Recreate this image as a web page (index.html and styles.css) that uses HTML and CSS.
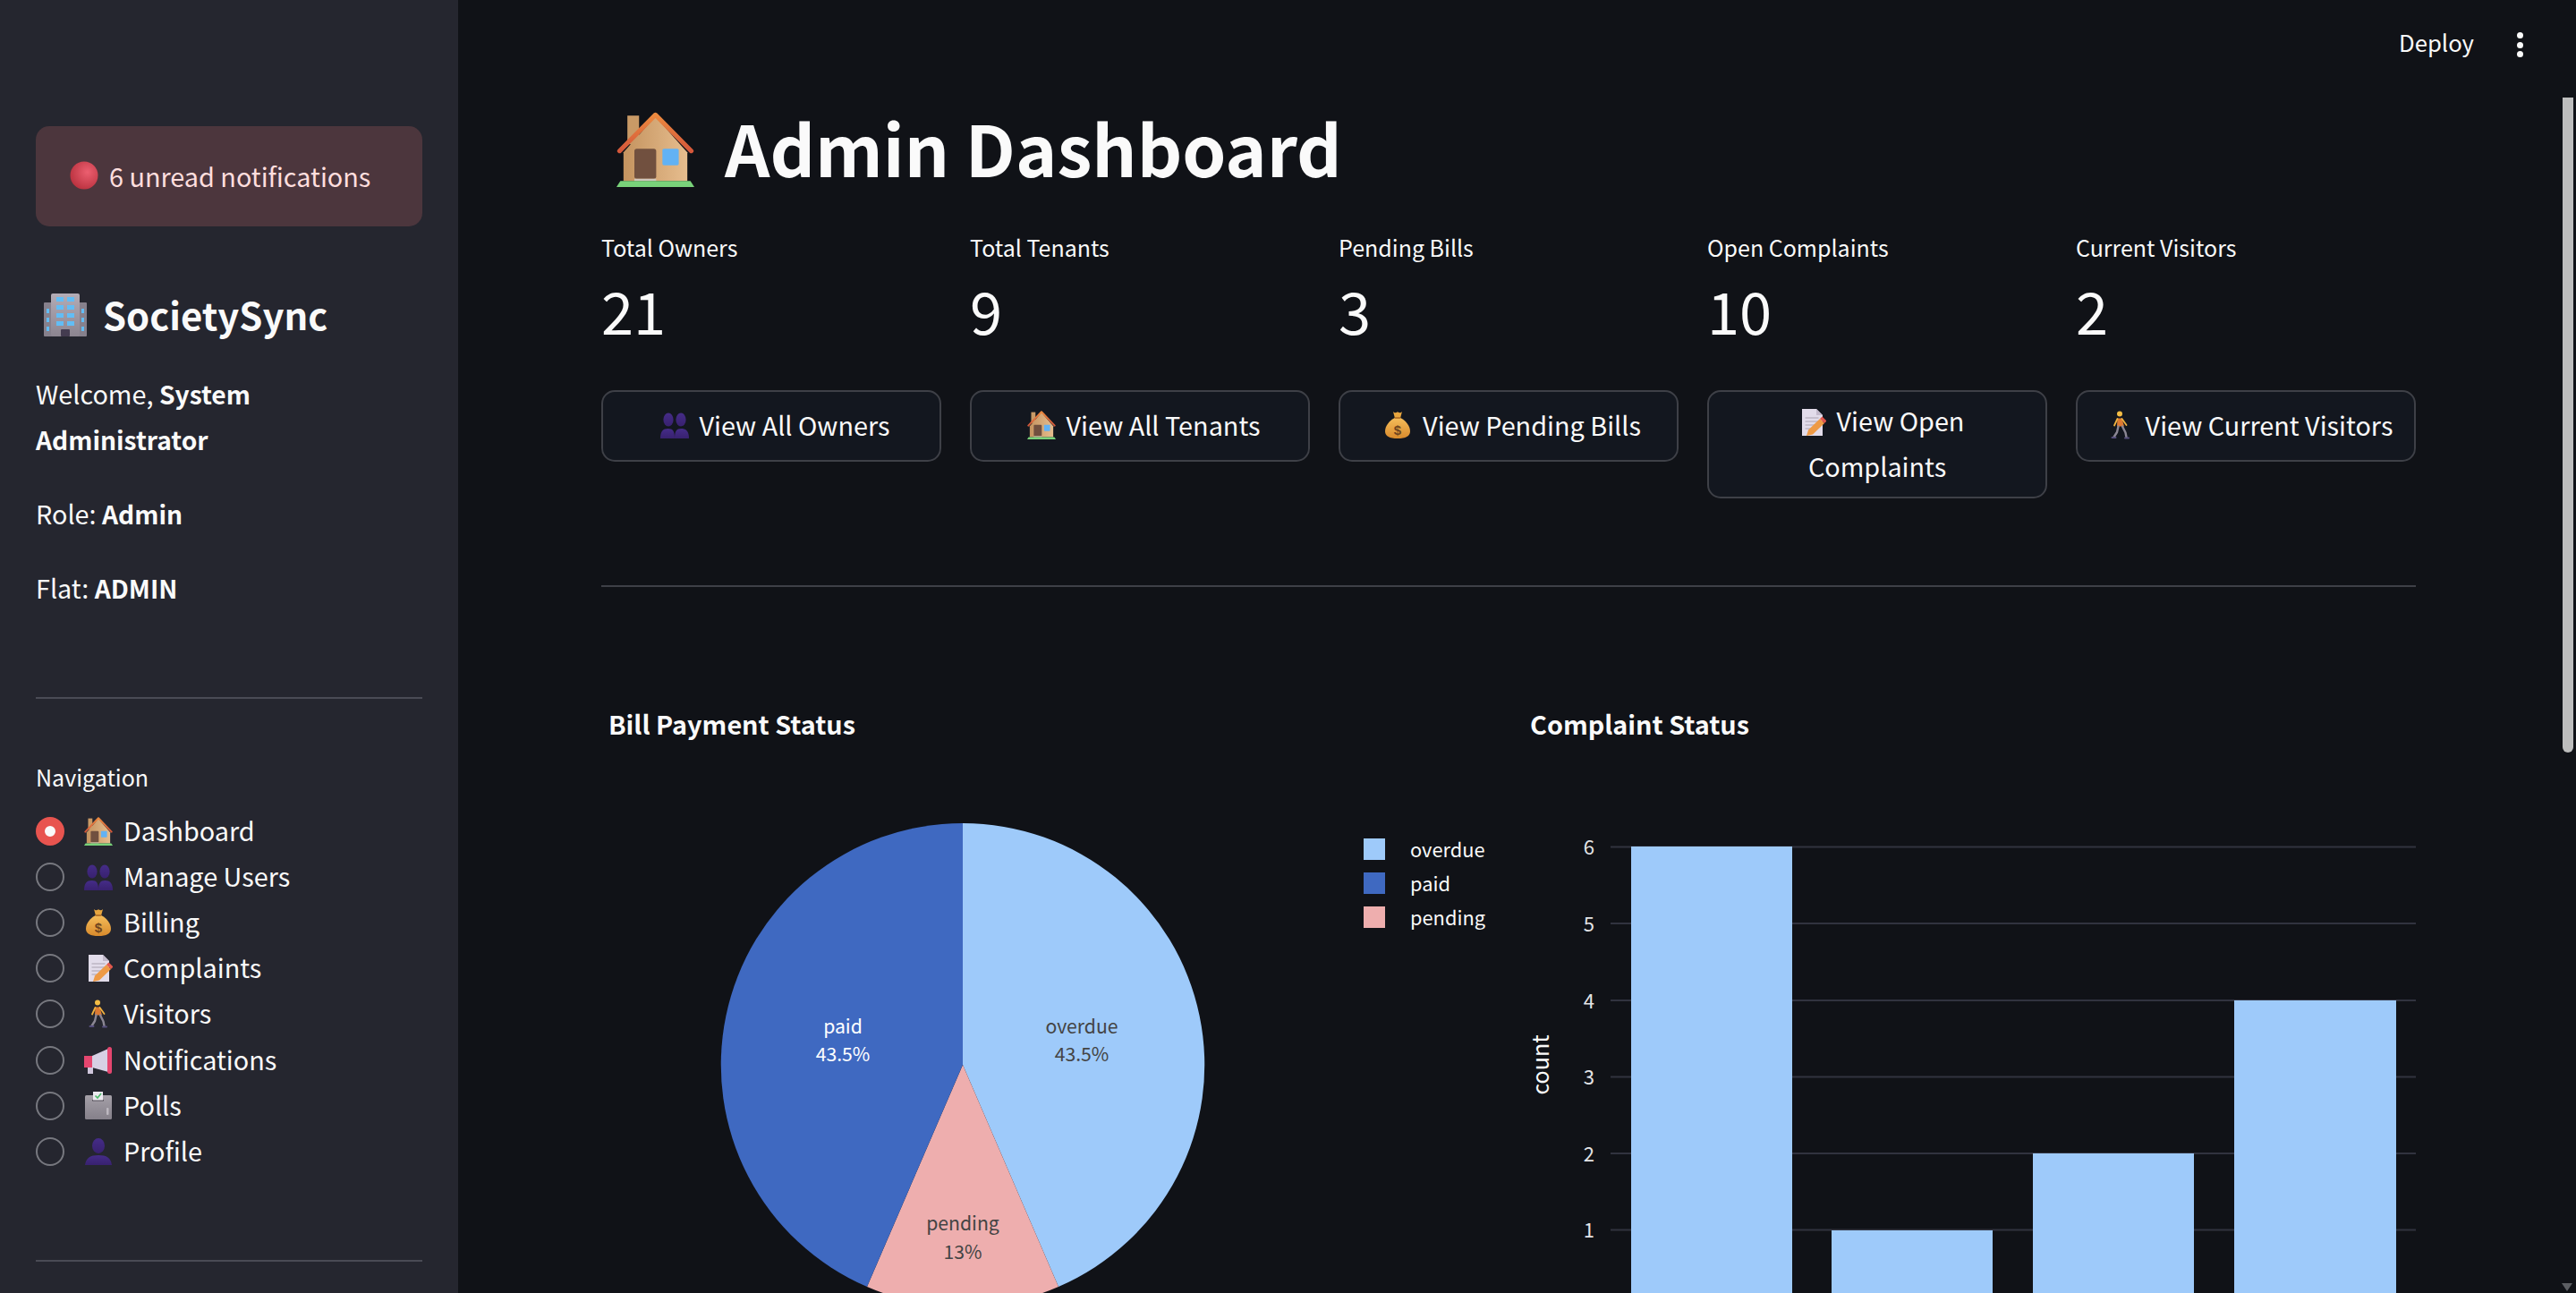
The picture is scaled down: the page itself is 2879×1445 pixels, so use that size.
FILE: index.html
```html
<!DOCTYPE html>
<html lang="en">
<head>
  <meta charset="UTF-8" />
  <title>Admin Dashboard</title>
  <link rel="stylesheet" href="styles.css">
</head>
<body>
  <!-- shared emoji icons -->
  <svg class="defs" aria-hidden="true">
    <defs>
      <linearGradient id="wall" x1="0" x2="1" y1="0" y2="0"><stop offset="0" stop-color="#c4935f"/><stop offset="1" stop-color="#e6bd8e"/></linearGradient>
      <linearGradient id="roof" x1="0" x2="0" y1="0" y2="1"><stop offset="0" stop-color="#ec8a3f"/><stop offset="1" stop-color="#d4573a"/></linearGradient>
      <linearGradient id="bust" x1="0" x2="0" y1="0" y2="1"><stop offset="0" stop-color="#452c88"/><stop offset="1" stop-color="#38216f"/></linearGradient>
      <linearGradient id="bag" x1="0" x2="0" y1="0" y2="1"><stop offset="0" stop-color="#f5bd5a"/><stop offset="1" stop-color="#d88a2c"/></linearGradient>
      <linearGradient id="tower" x1="0" x2="0" y1="0" y2="1"><stop offset="0" stop-color="#b3acb6"/><stop offset="1" stop-color="#8c8590"/></linearGradient>
      <linearGradient id="box" x1="0" x2="0" y1="0" y2="1"><stop offset="0" stop-color="#a5a0a8"/><stop offset="1" stop-color="#85808a"/></linearGradient>
      <radialGradient id="ball" cx="0.62" cy="0.38" r="0.7"><stop offset="0" stop-color="#ec5f70"/><stop offset="1" stop-color="#b8303d"/></radialGradient>

      <symbol id="i-house" viewBox="0 0 100 100" preserveAspectRatio="none">
        <rect x="14" y="5" width="15" height="38" fill="#c99a66"/>
        <path d="M9 54 50 6l41 48v38H9z" fill="url(#wall)"/>
        <path d="M4 52 50 4l46 48" fill="none" stroke="url(#roof)" stroke-width="6" stroke-linejoin="round" stroke-linecap="round"/>
        <rect x="23" y="49" width="28" height="40" rx="3" fill="#71503f"/>
        <rect x="59" y="49" width="21" height="22" rx="2" fill="#62b2f4"/>
        <rect x="23" y="89" width="28" height="3" fill="#cfc7bd"/>
        <path d="M5 92h90l5 8H0z" fill="#79d27a"/>
      </symbol>

      <symbol id="i-users" viewBox="0 0 32 32">
        <ellipse cx="9" cy="10" rx="5.6" ry="7.5" fill="url(#bust)"/>
        <path d="M0 31c0-8 3-11 8.600-11s7.400 3 7.400 11z" fill="url(#bust)"/>
        <ellipse cx="23" cy="10" rx="5.600" ry="7.500" fill="url(#bust)"/>
        <path d="M16 31c0-8 2-11 7.400-11S32 23 32 31z" fill="url(#bust)"/>
      </symbol>

      <symbol id="i-user" viewBox="0 0 32 32">
        <ellipse cx="16" cy="9.500" rx="7" ry="8.500" fill="url(#bust)"/>
        <path d="M1 31c1-8 6-11 15-11s14 3 15 11z" fill="url(#bust)"/>
      </symbol>

      <symbol id="i-bag" viewBox="0 0 32 32">
        <path d="M11 1c1.500 1.500 3 1.500 5 .3 2 1.200 3.500 1.200 5-.3l-1.800 6.800h-6.400z" fill="#e8a63f"/>
        <path d="M12.800 8h6.400c6 3 10.800 9 10.800 15 0 5.500-5 8-14 8s-14-2.500-14-8c0-6 4.800-12 10.800-15z" fill="url(#bag)"/>
        <rect x="12.500" y="7" width="7" height="2" rx="1" fill="#b9762a"/>
        <text x="16" y="27" text-anchor="middle" class="bag-mark">$</text>
      </symbol>

      <symbol id="i-doc" viewBox="0 0 32 32">
        <path d="M5 1h16l7 7v23H5z" fill="#e2dcea"/>
        <path d="M21 1l7 7h-7z" fill="#c3bacb"/>
        <path d="M8.500 11h15M8.500 15h15M8.500 19h11M8.500 23h7" stroke="#a9a2b0" stroke-width="1.200"/>
        <path d="M10 31l2-6.500L25 12l5 5-13 12.500z" fill="#ee9a45"/>
        <path d="M25 12l2.500-2.500 5 5L30 17z" fill="#e2574c"/>
      </symbol>

      <symbol id="i-walk" viewBox="0 0 32 32">
        <circle cx="15" cy="3.500" r="3" fill="#f4bd45"/>
        <path d="M12.500 8.500h5l2.500 9h-8z" fill="#dd7a32"/>
        <path d="M12.500 9 9 16.500M17.500 9l5 7" stroke="#f0b23f" stroke-width="1.800" stroke-linecap="round" fill="none"/>
        <path d="M13.500 17.500 12 24l-3.500 5.500M18 17.500l3.500 7 1 5" stroke="#8b8794" stroke-width="2.400" stroke-linecap="round" stroke-linejoin="round" fill="none"/>
        <path d="M6.500 30h4M21 30.500h4" stroke="#57507e" stroke-width="2" stroke-linecap="round"/>
      </symbol>

      <symbol id="i-horn" viewBox="0 0 32 32">
        <rect x="4" y="24" width="6" height="7" fill="#cfc6dc"/>
        <path d="M0 11h9v13H0z" fill="#e5466f"/>
        <path d="M9 11 27 3v26L9 24z" fill="#d7d0e4"/>
        <rect x="26" y="1" width="5" height="30" rx="2.500" fill="#e5466f"/>
      </symbol>

      <symbol id="i-poll" viewBox="0 0 32 32">
        <rect x="1" y="4" width="30" height="27" rx="1.500" fill="url(#box)"/>
        <rect x="9" y="9" width="13" height="1.500" fill="#55505a"/>
        <rect x="10" y="0" width="11" height="9.500" fill="#eceaf0"/>
        <path d="M12.500 4.500l2.500 2.500 4-5" fill="none" stroke="#4fbb6b" stroke-width="1.700"/>
        <rect x="25" y="18" width="2.500" height="8" rx="1" fill="#bdb8c0"/>
      </symbol>

      <symbol id="i-tower" viewBox="0 0 48 48">
        <rect x="0" y="10" width="48" height="38" rx="1" fill="#86808c"/>
        <rect x="8" y="0" width="32" height="48" rx="2" fill="url(#tower)"/>
        <g fill="#62bdf5">
          <rect x="14" y="4" width="8" height="5"/><rect x="26" y="4" width="8" height="5"/>
          <rect x="14" y="13" width="8" height="5"/><rect x="26" y="13" width="8" height="5"/>
          <rect x="14" y="22" width="8" height="5"/><rect x="26" y="22" width="8" height="5"/>
          <rect x="14" y="31" width="8" height="5"/><rect x="26" y="31" width="8" height="5"/>
          <rect x="3" y="17" width="3" height="5"/><rect x="42" y="17" width="3" height="5"/>
          <rect x="3" y="27" width="3" height="5"/><rect x="42" y="27" width="3" height="5"/>
          <rect x="3" y="37" width="3" height="5"/><rect x="42" y="37" width="3" height="5"/>
        </g>
        <rect x="19" y="40" width="10" height="8" rx="1" fill="#443c50"/>
      </symbol>

      <symbol id="i-ball" viewBox="0 0 32 32">
        <circle cx="16" cy="16" r="15.500" fill="url(#ball)"/>
      </symbol>
    </defs>
  </svg>

  <div class="app">
    <aside class="sidebar">
      <div class="alert">
        <svg class="icon-alert"><use href="#i-ball"/></svg>
        <span>6 unread notifications</span>
      </div>

      <h2 class="brand">
        <svg class="icon-brand"><use href="#i-tower"/></svg>
        SocietySync
      </h2>

      <p class="info info-first">Welcome, <b>System</b><br><b>Administrator</b></p>
      <p class="info">Role: <b>Admin</b></p>
      <p class="info">Flat: <b>ADMIN</b></p>

      <hr class="side-rule side-rule-first">

      <div class="nav-title">Navigation</div>
      <div class="nav">
        <div class="nav-item"><span class="radio radio-on"></span><svg class="icon-nav"><use href="#i-house"/></svg>Dashboard</div>
        <div class="nav-item"><span class="radio"></span><svg class="icon-nav"><use href="#i-users"/></svg>Manage Users</div>
        <div class="nav-item"><span class="radio"></span><svg class="icon-nav"><use href="#i-bag"/></svg>Billing</div>
        <div class="nav-item"><span class="radio"></span><svg class="icon-nav"><use href="#i-doc"/></svg>Complaints</div>
        <div class="nav-item"><span class="radio"></span><svg class="icon-nav"><use href="#i-walk"/></svg>Visitors</div>
        <div class="nav-item"><span class="radio"></span><svg class="icon-nav"><use href="#i-horn"/></svg>Notifications</div>
        <div class="nav-item"><span class="radio"></span><svg class="icon-nav"><use href="#i-poll"/></svg>Polls</div>
        <div class="nav-item"><span class="radio"></span><svg class="icon-nav"><use href="#i-user"/></svg>Profile</div>
      </div>

      <hr class="side-rule side-rule-last">
    </aside>

    <main class="main">
      <header class="toolbar">
        <span class="deploy">Deploy</span>
        <span class="kebab"><i></i><i></i><i></i></span>
      </header>

      <div class="content">
        <h1 class="title">
          <svg class="icon-title"><use href="#i-house"/></svg>
          Admin Dashboard
        </h1>

        <section class="stats">
          <div class="stat">
            <div class="stat-label">Total Owners</div>
            <div class="stat-value">21</div>
            <button class="btn"><svg class="icon-btn"><use href="#i-users"/></svg>View All Owners</button>
          </div>
          <div class="stat">
            <div class="stat-label">Total Tenants</div>
            <div class="stat-value">9</div>
            <button class="btn"><svg class="icon-btn"><use href="#i-house"/></svg>View All Tenants</button>
          </div>
          <div class="stat">
            <div class="stat-label">Pending Bills</div>
            <div class="stat-value">3</div>
            <button class="btn"><svg class="icon-btn"><use href="#i-bag"/></svg>View Pending Bills</button>
          </div>
          <div class="stat">
            <div class="stat-label">Open Complaints</div>
            <div class="stat-value">10</div>
            <button class="btn btn-wrap"><span><svg class="icon-btn"><use href="#i-doc"/></svg>View Open<br>Complaints</span></button>
          </div>
          <div class="stat">
            <div class="stat-label">Current Visitors</div>
            <div class="stat-value">2</div>
            <button class="btn"><svg class="icon-btn"><use href="#i-walk"/></svg>View Current Visitors</button>
          </div>
        </section>

        <hr class="main-rule">

        <section class="charts">
          <svg class="chart chart-pie" viewBox="672 760 1016 700">
            <text x="680" y="821" class="chart-title">Bill Payment Status</text>
            <path d="M1076 1190V920A270 270 0 0 1 1183 1438Z" fill="#9ecafa"/>
            <path d="M1076 1190L1183 1438A270 270 0 0 1 969 1438Z" fill="#eeaeae"/>
            <path d="M1076 1190L969 1438A270 270 0 0 1 1076 920Z" fill="#3f69c1"/>
            <g class="slice-label light">
              <text x="942" y="1155">paid</text>
              <text x="942" y="1186">43.5%</text>
            </g>
            <g class="slice-label">
              <text x="1209" y="1155">overdue</text>
              <text x="1209" y="1186">43.5%</text>
              <text x="1076" y="1375">pending</text>
              <text x="1076" y="1407">13%</text>
            </g>
            <rect x="1524" y="937" width="24" height="24" fill="#9ecafa"/>
            <rect x="1524" y="975" width="24" height="24" fill="#3f69c1"/>
            <rect x="1524" y="1013" width="24" height="24" fill="#eeaeae"/>
            <g class="legend">
              <text x="1576" y="958">overdue</text>
              <text x="1576" y="996">paid</text>
              <text x="1576" y="1034">pending</text>
            </g>
          </svg>

          <svg class="chart chart-bar" viewBox="1688 760 1012 700">
            <text x="1710" y="821" class="chart-title">Complaint Status</text>
            <g class="grid-line">
              <path d="M1800 946.500H2700M1800 1032H2700M1800 1118H2700M1800 1203.500H2700M1800 1289H2700M1800 1374.500H2700"/>
            </g>
            <g class="tick">
              <text x="1782" y="955">6</text>
              <text x="1782" y="1041">5</text>
              <text x="1782" y="1127">4</text>
              <text x="1782" y="1212">3</text>
              <text x="1782" y="1298">2</text>
              <text x="1782" y="1383">1</text>
            </g>
            <text class="axis-title" transform="translate(1731 1190) rotate(-90)">count</text>
            <rect x="1823" y="946" width="180" height="514" fill="#9ecafa"/>
            <rect x="2047" y="1375" width="180" height="85" fill="#9ecafa"/>
            <rect x="2272" y="1289" width="180" height="171" fill="#9ecafa"/>
            <rect x="2497" y="1118" width="181" height="342" fill="#9ecafa"/>
          </svg>
        </section>
      </div>

      <div class="scroll-thumb"></div>
      <div class="scroll-arrow"></div>
    </main>
  </div>
</body>
</html>
```

FILE: styles.css
```css
* {
  box-sizing: border-box;
}
html, body {
  margin: 0;
  height: 100%;
  overflow: hidden;
}
body {
  font-family: "Noto Sans CJK SC", "Noto Sans", sans-serif;
  font-size: 28.800px;
  color: #fafafa;
  background-color: #101217;
}
.defs {
  position: absolute;
  width: 0;
  height: 0;
}
.bag-mark {
  font-family: "Liberation Sans", sans-serif;
  font-size: 15px;
  font-weight: 700;
  fill: #6e4420;
}

.app {
  display: flex;
  height: 100vh;
  overflow: hidden;
}

/* sidebar */
.sidebar {
  flex: 0 0 512px;
  padding: 141px 40px 0;
  background-color: #25262f;
}
.alert {
  display: flex;
  align-items: center;
  gap: 12px;
  height: 112px;
  padding-left: 38px;
  padding-bottom: 2px;
  border-radius: 15px;
  background-color: #4c363d;
  color: #ffdede;
}
.icon-alert {
  width: 32px;
  height: 32px;
}
.brand {
  display: flex;
  align-items: center;
  gap: 18px;
  margin: 70px 0 0;
  padding-left: 9px;
  padding-bottom: 3px;
  font-size: 41.800px;
  font-weight: 600;
  line-height: 57px;
}
.icon-brand {
  width: 48px;
  height: 48px;
}
.info {
  margin: 32px 0 0;
  line-height: 51px;
}
.info-first {
  margin-top: 31px;
}
.info b {
  font-size: 28.200px;
  font-weight: 600;
}
.side-rule {
  height: 2px;
  margin: 0;
  border: none;
  background-color: #4a4b55;
}
.side-rule-first {
  margin-top: 97px;
}
.side-rule-last {
  margin-top: 95px;
}
.nav-title {
  margin-top: 67px;
  font-size: 25px;
  line-height: 40px;
}
.nav {
  margin-top: 15px;
}
.nav-item {
  display: flex;
  align-items: center;
  height: 51.200px;
  padding-bottom: 3px;
}
.radio {
  flex: none;
  width: 32px;
  height: 32px;
  margin-top: 3px;
  margin-right: 22px;
  border: 2px solid #77787f;
  border-radius: 50%;
}
.radio-on {
  border: 10px solid #e8544f;
  background-color: #fafafa;
}
.icon-nav {
  flex: none;
  width: 32px;
  height: 32px;
  margin-top: 3px;
  margin-right: 12px;
}

/* main area */
.main {
  position: relative;
  flex: 1;
}
.toolbar {
  display: flex;
  align-items: center;
  justify-content: flex-end;
  height: 100px;
  padding-right: 59px;
}
.deploy {
  margin-right: 48px;
  padding-bottom: 7px;
  font-size: 25.700px;
}
.kebab {
  display: flex;
  flex-direction: column;
  gap: 3.500px;
}
.kebab i {
  display: block;
  width: 7px;
  height: 7px;
  border-radius: 50%;
  background-color: #fafafa;
}
.content {
  padding: 0 179px 0 160px;
}
.title {
  display: flex;
  align-items: center;
  gap: 34px;
  margin: 0;
  padding-left: 17px;
  padding-bottom: 6px;
  font-size: 78.600px;
  font-weight: 700;
  line-height: 128px;
}
.icon-title {
  width: 87px;
  height: 84px;
  margin-top: 6px;
}
.stats {
  display: grid;
  grid-template-columns: repeat(5, 380px);
  gap: 32px;
  align-items: start;
  margin-top: 22px;
}
.stat-label {
  font-size: 25px;
  line-height: 40px;
  padding-bottom: 2px;
  height: 42px;
}
.stat-value {
  margin-top: 6px;
  height: 92px;
  font-size: 65px;
  line-height: 84px;
}
.btn {
  display: flex;
  align-items: center;
  justify-content: center;
  width: 100%;
  min-height: 80px;
  margin-top: 40px;
  padding: 0 20px 3px;
  border: 2px solid #3e4047;
  border-radius: 15px;
  background-color: #13171f;
  color: #fafafa;
  font-family: inherit;
  font-size: 28.800px;
  line-height: 51px;
}
.btn-wrap {
  min-height: 121px;
}
.icon-btn {
  flex: none;
  width: 32px;
  height: 32px;
  margin-left: 8px;
  margin-right: 12px;
  vertical-align: -6px;
}
.main-rule {
  height: 2px;
  margin: 97px 0 0;
  border: none;
  background-color: #3e4047;
}

/* charts */
.charts {
  display: grid;
  grid-template-columns: 1016px 1012px;
  margin-top: 104px;
}
.chart {
  display: block;
  width: 100%;
  height: 700px;
}
.chart-title {
  font-size: 28.800px;
  font-weight: 700;
  fill: #fafafa;
}
.slice-label text {
  font-size: 21.200px;
  text-anchor: middle;
  fill: #444444;
}
.slice-label.light text {
  fill: #ffffff;
}
.legend text {
  font-size: 21.800px;
  fill: #fafafa;
}
.grid-line path {
  stroke: #31333f;
  stroke-width: 2;
}
.tick text {
  font-size: 22px;
  text-anchor: end;
  fill: #e4e4e6;
}
.axis-title {
  font-size: 25px;
  text-anchor: middle;
  fill: #fafafa;
}

/* fake scrollbar */
.scroll-thumb {
  position: absolute;
  top: 109px;
  right: 3px;
  width: 12px;
  height: 732px;
  border-radius: 0 0 6px 6px;
  background-color: #bdbdbd;
}
.scroll-arrow {
  position: absolute;
  right: 4px;
  bottom: 2px;
  border-top: 9px solid #5c5e63;
  border-left: 6px solid transparent;
  border-right: 6px solid transparent;
}
```
